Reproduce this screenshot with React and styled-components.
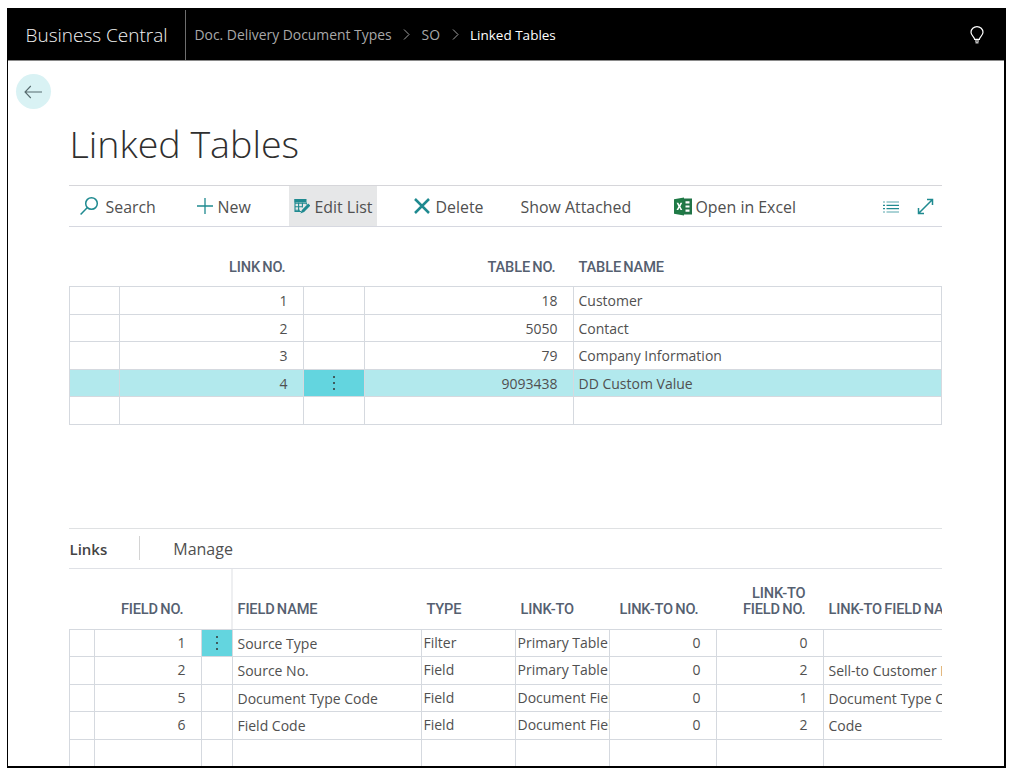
import React from "react";
import styled, { createGlobalStyle } from "styled-components";

const Global = createGlobalStyle`
  html, body { margin: 0; padding: 0; background: #fff; }
  body { font-family: "Open Sans", "Noto Sans", sans-serif; color: #505050; }
`;

const Frame = styled.div`
  box-sizing: border-box;
  margin: 8px 0 0 7px;
  width: 999px;
  height: 760px;
  border-left: 1.5px solid #000;
  border-right: 2px solid #000;
  border-bottom: 2px solid #000;
  display: flex;
  flex-direction: column;
  overflow: hidden;
`;

const TopBar = styled.header`
  flex: none;
  height: 52px;
  background: #000;
  border-bottom: 1px solid #8a8a8a;
  display: flex;
  align-items: stretch;
  margin-right: -2px;
  margin-left: -1.5px;
`;
const Brand = styled.div`
  width: 179px;
  padding-left: 19px;
  box-sizing: border-box;
  color: #f2f2f2;
  font-size: 19px;
  font-weight: 300;
  line-height: 50px;
  white-space: nowrap;
  border-right: 1px solid #6e6e6e;
  margin-top: 2px;
  height: 50px;
`;
const Crumbs = styled.nav`
  display: flex;
  align-items: center;
  padding-left: 9px;
  font-size: 13.9px;
  color: #a8a8a8;
  flex: 1;
  line-height: 52px;
  padding-top: 1px;
`;
const Sep = styled.span`
  display: inline-flex;
  margin: 0 11.5px;
`;
const Current = styled.span`
  color: #fff;
  font-size: 13.5px;
`;
const Bulb = styled.div`
  width: 59px;
  display: flex;
  justify-content: center;
  align-items: center;
  padding-top: 2px;
`;

const Main = styled.main`
  flex: 1;
  min-height: 0;
  padding: 0 62.5px 0 7.5px;
  display: flex;
  flex-direction: column;
`;
const BackButton = styled.button`
  align-self: flex-start;
  width: 35px;
  height: 35px;
  margin-top: 13px;
  border: none;
  padding: 0;
  border-radius: 50%;
  background: #d9f2f4;
  display: flex;
  align-items: center;
  justify-content: center;
`;
const Content = styled.div`
  padding-left: 53px;
  display: flex;
  flex-direction: column;
  flex: 1;
  min-height: 0;
`;
const Title = styled.h1`
  margin: 8px 0 0 1px;
  height: 68px;
  font-size: 37.6px;
  line-height: 54px;
  font-weight: 300;
  color: #2f2f2f;
  white-space: nowrap;
`;

const Toolbar = styled.div`
  flex: none;
  height: 42px;
  box-sizing: border-box;
  border-top: 1px solid #d6d6da;
  border-bottom: 1px solid #d6d8e0;
  display: flex;
  align-items: stretch;
`;
const Action = styled.div`
  width: ${(p) => p.$w}px;
  padding-left: ${(p) => p.$pl}px;
  box-sizing: border-box;
  display: flex;
  align-items: center;
  gap: ${(p) => p.$gap ?? 5}px;
  font-size: 15.9px;
  color: #505050;
  white-space: nowrap;
  background: ${(p) => (p.$active ? "#e6e7e8" : "transparent")};
`;
const ActionLabel = styled.span`
  padding-top: 2px;
`;
const ViewIcons = styled.div`
  margin-left: auto;
  padding-right: 8px;
  display: flex;
  align-items: center;
  gap: 18px;
`;

const Head = styled.div`
  display: grid;
  grid-template-columns: ${(p) => p.$cols};
  height: ${(p) => p.$h}px;
  align-items: end;
  box-sizing: border-box;
  padding-bottom: ${(p) => p.$pb}px;
`;
const HeadCell = styled.div`
  font-family: "Roboto", sans-serif;
  font-size: 14.6px;
  font-weight: 500;
  line-height: 16px;
  letter-spacing: -0.15px;
  color: #556070;
  text-align: ${(p) => (p.$right ? "right" : "left")};
  padding: ${(p) => (p.$right ? "0 17px 0 0" : `0 0 0 ${p.$pl ?? 6}px`)};
  white-space: nowrap;
  overflow: hidden;
  word-spacing: -1.2px;
`;

const Grid = styled.div`
  border-top: 1px solid #d5d9df;
  border-left: 1px solid #d5d9df;
  box-sizing: border-box;
`;
const Row = styled.div`
  display: grid;
  grid-template-columns: ${(p) => p.$cols};
  height: 27.5px;
  box-sizing: border-box;
  border-bottom: 1px solid #d5d9df;
  background: ${(p) => (p.$selected ? "#b2e9ed" : "transparent")};
`;
const Cell = styled.div`
  box-sizing: border-box;
  border-right: 1px solid #d5d9df;
  font-size: 14px;
  line-height: 25px;
  padding: ${(p) => (p.$right ? "0 15px 0 0" : `0 0 0 ${p.$pl ?? 5}px`)};
  padding-top: ${(p) => p.$down ?? 0}px;
  text-align: ${(p) => (p.$right ? "right" : "left")};
  white-space: nowrap;
  overflow: hidden;
  color: #505050;
`;
const DotsCell = styled.div`
  box-sizing: border-box;
  border-right: 1px solid #d5d9df;
  background: ${(p) => (p.$on ? "#63d5df" : "transparent")};
  display: flex;
  align-items: center;
  justify-content: center;
`;
const Dots = () => (
  <svg width="4" height="16" viewBox="0 0 4 16">
    <circle cx="2" cy="2" r="1" fill="#333" />
    <circle cx="2" cy="8" r="1" fill="#333" />
    <circle cx="2" cy="14" r="1" fill="#333" />
  </svg>
);

const Gap = styled.div`
  flex: none;
  height: 103px;
`;

const TabBar = styled.div`
  flex: none;
  height: 41px;
  box-sizing: border-box;
  border-top: 1px solid #dfe1e3;
  border-bottom: 1px solid #dfe1e6;
  display: flex;
  align-items: center;
  padding-left: 1px;
`;
const TabActive = styled.div`
  font-size: 15px;
  font-weight: 600;
  color: #444;
  padding-right: 32px;
  height: 24px;
  line-height: 26px;
  border-right: 1px solid #d4d4d4;
`;
const Tab = styled.div`
  margin-left: 33px;
  padding-top: 2px;
  font-size: 16px;
  color: #505050;
`;

const Clip = styled.div`
  flex: 1;
  min-height: 0;
  overflow: hidden;
  width: 873px;
  position: relative;
`;
const Wide = styled.div`
  width: 904px;
`;
const FrozenEdge = styled.div`
  position: absolute;
  left: 162px;
  top: 0;
  height: 60px;
  width: 2px;
  background: #eeeff1;
`;

const teal = "#1f8a90";

const SearchIcon = () => (
  <svg width="20" height="20" viewBox="0 0 20 20" fill="none" stroke={teal} strokeWidth="1.5">
    <circle cx="12.5" cy="7.5" r="5.8" />
    <path d="M8.4 11.6 1.6 18.6" />
  </svg>
);
const PlusIcon = () => (
  <svg width="16" height="16" viewBox="0 0 16 16" fill="none" stroke={teal} strokeWidth="1.3">
    <path d="M8 0v16M0 8h16" />
  </svg>
);
const EditIcon = () => (
  <svg width="16" height="16" viewBox="0 0 16 16" fill="none">
    <path d="M0.5 1h12v3.5H0.5z" fill={teal} />
    <path d="M0.5 5.2h11.5M0.5 8.7h8M0.5 12.2h5.5M1 1v12.5h6M4.6 4.5v9M8.4 4.5v5M12.4 4.5v2" stroke={teal} strokeWidth="1.1" />
    <path d="M14.2 5.6 7.9 12 6.4 15.6l3.7-1.5 6.3-6.4z" fill={teal} />
  </svg>
);
const DeleteIcon = () => (
  <svg width="16" height="16" viewBox="0 0 16 16" fill="none" stroke={teal} strokeWidth="2.5">
    <path d="M1 1 15 15M15 1 1 15" />
  </svg>
);
const ExcelIcon = () => (
  <svg width="18" height="19" viewBox="0 0 18 19">
    <path d="M9 1.5h9v16H9z" fill="#217346" />
    <path d="M11.5 4.2h4v2.2h-4zM11.5 8.4h4v2.2h-4zM11.5 12.6h4v2.2h-4z" fill="#fff" />
    <path d="M0 2.2 10 .5v18L0 16.8z" fill="#1f7a46" />
    <path d="M2.6 5.8h1.8l1 2.1 1.1-2.1h1.7L6.4 9.4l1.9 3.7H6.5L5.4 10.800l-1.100 2.300H2.500l1.900-3.700z" fill="#fff" />
  </svg>
);
const ListIconSvg = styled.svg`
  margin-top: 2px;
`;
const ListIcon = () => (
  <ListIconSvg width="16" height="12" viewBox="0 0 16 12" fill="none" stroke={teal}>
    <path d="M0 1h2M0 11h2M3.500 1H16M3.500 11H16" strokeWidth="1" opacity=".75" />
    <path d="M0 4.300h2M0 7.700h2M3.500 4.300H16M3.500 7.700H16" strokeWidth="1.300" />
  </ListIconSvg>
);
const ExpandIcon = () => (
  <svg width="17" height="17" viewBox="0 0 17 17" fill="none" stroke={teal} strokeWidth="1.5">
    <path d="M1.500 15.500 15.500 1.500M10 1.500H15.500V7M1.500 10V15.500H7" />
  </svg>
);
const BackIcon = () => (
  <svg width="18" height="16" viewBox="0 0 18 16" fill="none" stroke="#566a6e" strokeWidth="1.100">
    <path d="M18 8H1M6.800 2 1 8l5.800 6" />
  </svg>
);
const Chevron = () => (
  <svg width="7" height="11" viewBox="0 0 7 11" fill="none" stroke="#a0a0a0" strokeWidth="1">
    <path d="M1 .5 6 5.500 1 10.500" />
  </svg>
);
const BulbIcon = () => (
  <svg width="14" height="19" viewBox="0 0 14 19" fill="none" stroke="#fff" strokeWidth="1.200">
    <path d="M4.600 13.300C4.300 10.800 1 9.600 1 6.300A6 5.700 0 0 1 13 6.300c0 3.300-3.300 4.500-3.600 7z" />
    <path d="M5 15h4M5.500 16.700h3" stroke="#bdbdbd" strokeWidth="1.400" />
  </svg>
);

const topCols = "50px 184px 61px 209px 368px";
const lowCols = "25px 107px 31px 189px 94px 94px 107px 107px 150px";

const topRows = [
  ["1", "18", "Customer"],
  ["2", "5050", "Contact"],
  ["3", "79", "Company Information"],
  ["4", "9093438", "DD Custom Value"],
  ["", "", ""],
];

const lowRows = [
  ["1", "Source Type", "Filter", "Primary Table", "0", "0", ""],
  ["2", "Source No.", "Field", "Primary Table", "0", "2", "Sell-to Customer No."],
  ["5", "Document Type Code", "Field", "Document Field", "0", "1", "Document Type Code"],
  ["6", "Field Code", "Field", "Document Field", "0", "2", "Code"],
  ["", "", "", "", "", "", ""],
];

export default function App() {
  return (
    <>
      <Global />
      <Frame>
        <TopBar>
          <Brand>Business Central</Brand>
          <Crumbs>
            <span>Doc. Delivery Document Types</span>
            <Sep><Chevron /></Sep>
            <span>SO</span>
            <Sep><Chevron /></Sep>
            <Current>Linked Tables</Current>
          </Crumbs>
          <Bulb><BulbIcon /></Bulb>
        </TopBar>
        <Main>
          <BackButton aria-label="Back"><BackIcon /></BackButton>
          <Content>
            <Title>Linked Tables</Title>
            <Toolbar>
              <Action $w={120} $pl={10} $gap={7}><SearchIcon /><ActionLabel>Search</ActionLabel></Action>
              <Action $w={100} $pl={8}><PlusIcon /><ActionLabel>New</ActionLabel></Action>
              <Action $w={88} $pl={5} $active><EditIcon /><ActionLabel>Edit List</ActionLabel></Action>
              <Action $w={144} $pl={37} $gap={6}><DeleteIcon /><ActionLabel>Delete</ActionLabel></Action>
              <Action $w={153} $pl={0}><ActionLabel>Show Attached</ActionLabel></Action>
              <Action $w={160} $pl={0} $gap={4}><ExcelIcon /><ActionLabel>Open in Excel</ActionLabel></Action>
              <ViewIcons><ListIcon /><ExpandIcon /></ViewIcons>
            </Toolbar>
            <Head $cols="234px 270px 369px" $h={59} $pb={11}>
              <HeadCell $right>LINK NO.</HeadCell>
              <HeadCell $right>TABLE NO.</HeadCell>
              <HeadCell>TABLE NAME</HeadCell>
            </Head>
            <Grid>
              {topRows.map((r, i) => (
                <Row key={i} $cols={topCols} $selected={i === 3}>
                  <Cell />
                  <Cell $right $down={1}>{r[0]}</Cell>
                  <DotsCell $on={i === 3}>{i === 3 && <Dots />}</DotsCell>
                  <Cell $right $down={1}>{r[1]}</Cell>
                  <Cell $down={1}>{r[2]}</Cell>
                </Row>
              ))}
            </Grid>
            <Gap />
            <TabBar>
              <TabActive>Links</TabActive>
              <Tab>Manage</Tab>
            </TabBar>
            <Clip>
              <FrozenEdge />
              <Wide>
                <Head $cols={lowCols} $h={60} $pb={12}>
                  <span />
                  <HeadCell $right>FIELD NO.</HeadCell>
                  <span />
                  <HeadCell>FIELD NAME</HeadCell>
                  <HeadCell>TYPE</HeadCell>
                  <HeadCell>LINK-TO</HeadCell>
                  <HeadCell $right>LINK-TO NO.</HeadCell>
                  <HeadCell $right>LINK-TO<br />FIELD NO.</HeadCell>
                  <HeadCell>LINK-TO FIELD NAME</HeadCell>
                </Head>
                <Grid>
                  {lowRows.map((r, i) => (
                    <Row key={i} $cols={lowCols}>
                      <Cell />
                      <Cell $right>{r[0]}</Cell>
                      <DotsCell $on={i === 0}>{i === 0 && <Dots />}</DotsCell>
                      <Cell $pl={5} $down={1}>{r[1]}</Cell>
                      <Cell $pl={2}>{r[2]}</Cell>
                      <Cell $pl={2}>{r[3]}</Cell>
                      <Cell $right>{r[4]}</Cell>
                      <Cell $right>{r[5]}</Cell>
                      <Cell $pl={5} $down={1}>{r[6]}</Cell>
                    </Row>
                  ))}
                </Grid>
              </Wide>
            </Clip>
          </Content>
        </Main>
      </Frame>
    </>
  );
}
